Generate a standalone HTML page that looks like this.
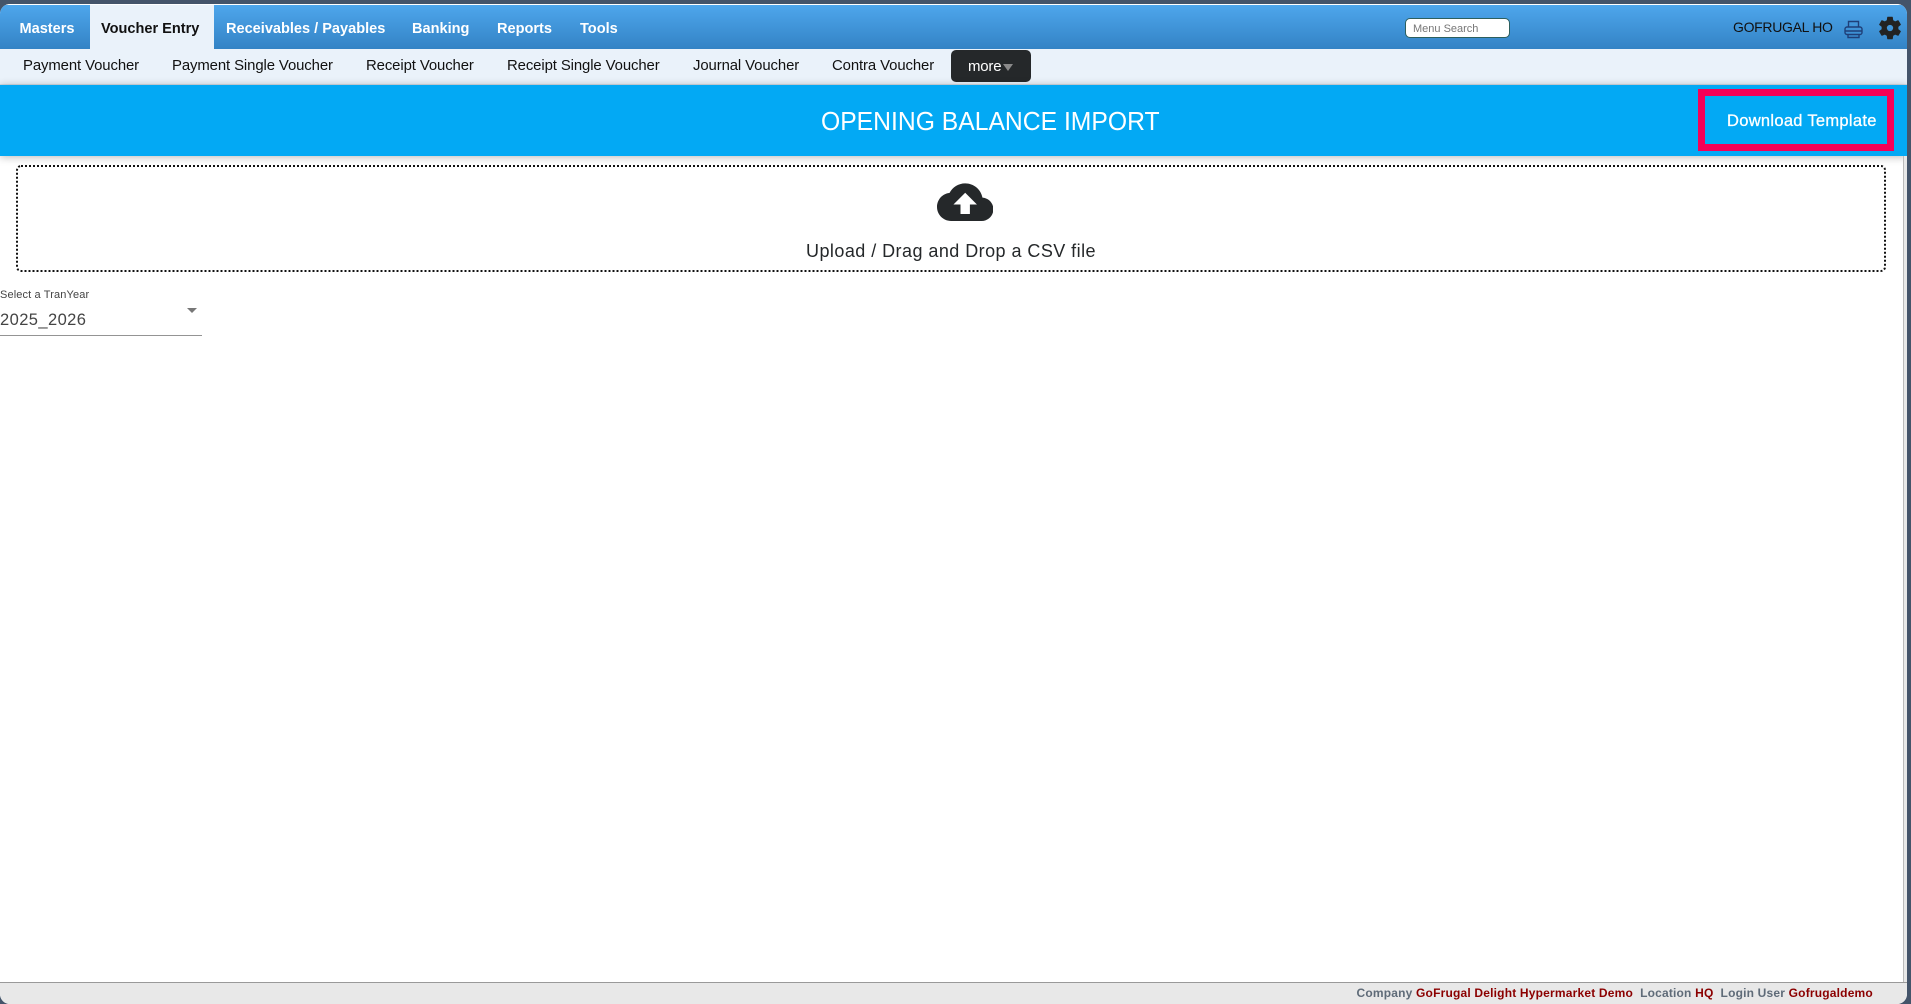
<!DOCTYPE html>
<html><head><meta charset="utf-8"><title>Opening Balance Import</title>
<style>
html,body{margin:0;padding:0;width:1911px;height:1004px;overflow:hidden;background:#44546a}
*{box-sizing:border-box}
#win{position:absolute;left:0;top:4px;width:1907px;height:1000px;background:#fff;border-radius:10px;overflow:hidden;font-family:"Liberation Sans",Arial,sans-serif}
.abs,.t{position:absolute;white-space:nowrap}
.t{line-height:20px}
.n{color:#fff;font-weight:bold;font-size:14.55px;top:15px}
.s{color:#111;font-size:14.9px;top:52px;letter-spacing:-.1px}
</style></head><body>
<div id="win">
<div class="abs" style="left:0;top:0;width:1907px;height:1px;background:#fff"></div>
<div class="abs" style="left:0;top:1px;width:1907px;height:44px;background:linear-gradient(#4ea6ec,#3383c5)"></div>
<div class="abs" style="left:90px;top:1px;width:124px;height:44px;background:#eaf2fa"></div>
<div class="abs" style="left:0;top:45px;width:1907px;height:36px;background:#eaf2fa;border-bottom:1px solid #d4dde6"></div>
<span class="t n" style="left:19.5px">Masters</span>
<span class="t n" style="left:101px;color:#111">Voucher Entry</span>
<span class="t n" style="left:226px">Receivables / Payables</span>
<span class="t n" style="left:412px">Banking</span>
<span class="t n" style="left:497px">Reports</span>
<span class="t n" style="left:580px">Tools</span>

<div class="abs" style="left:1405px;top:14px;width:105px;height:20px;background:#fff;border:1px solid #2d5f5d;border-radius:5px"></div>
<span class="t" style="left:1413px;top:15px;font-size:11px;color:#777">Menu Search</span>
<span class="t" style="left:1733px;top:13px;font-size:14px;color:#111;letter-spacing:-.3px">GOFRUGAL HO</span>
<svg class="abs" style="left:1844px;top:16px" width="19" height="19" viewBox="0 0 19 19" fill="none" stroke="#1f3f78" stroke-width="1.4"><path d="M4.5 7V1.5h10V7"/><rect x="1" y="7" width="17" height="7.5" rx="2"/><path d="M4 14.5v3h11v-3M1 11h17"/></svg>
<svg class="abs" style="left:1876px;top:9.5px" width="28" height="28" viewBox="0 0 24 24" fill="#222"><path d="M19.14 12.94c.04-.3.06-.61.06-.94 0-.32-.02-.64-.07-.94l2.03-1.58c.18-.14.23-.41.12-.61l-1.92-3.32c-.12-.22-.37-.29-.59-.22l-2.39.96c-.5-.38-1.03-.7-1.62-.94l-.36-2.54c-.04-.24-.24-.41-.48-.41h-3.84c-.24 0-.43.17-.47.41l-.36 2.54c-.59.24-1.13.57-1.62.94l-2.39-.96c-.22-.08-.47 0-.59.22L2.74 8.87c-.12.21-.08.47.12.61l2.03 1.58c-.05.3-.09.63-.09.94s.02.64.07.94l-2.03 1.58c-.18.14-.23.41-.12.61l1.92 3.32c.12.22.37.29.59.22l2.39-.96c.5.38 1.03.7 1.62.94l.36 2.54c.05.24.24.41.48.41h3.84c.24 0 .44-.17.47-.41l.36-2.54c.59-.24 1.13-.56 1.62-.94l2.39.96c.22.08.47 0 .59-.22l1.92-3.32c.12-.22.07-.47-.12-.61l-2.01-1.58zM12 15.6c-1.98 0-3.6-1.62-3.6-3.6s1.62-3.6 3.6-3.6 3.6 1.62 3.6 3.6-1.62 3.6-3.6 3.6z"/><circle cx="12" cy="12" r="3.4" fill="none" stroke="#222" stroke-width="1.4"/></svg>

<span class="t s" style="left:23px">Payment Voucher</span>
<span class="t s" style="left:172px">Payment Single Voucher</span>
<span class="t s" style="left:366px">Receipt Voucher</span>
<span class="t s" style="left:507px">Receipt Single Voucher</span>
<span class="t s" style="left:693px">Journal Voucher</span>
<span class="t s" style="left:832px">Contra Voucher</span>
<div class="abs" style="left:951px;top:46px;width:80px;height:32px;background:#25282a;border-radius:5px"></div>
<span class="t" style="left:968px;top:53px;font-size:15px;color:#fff;letter-spacing:-.2px">more</span>
<div class="abs" style="left:1003px;top:60px;width:0;height:0;border-left:5.5px solid transparent;border-right:5.5px solid transparent;border-top:7px solid #8a8a8a"></div>

<div class="abs" style="left:0;top:81px;width:1907px;height:71px;background:#03a9f4;box-shadow:0 1px 8px rgba(0,0,0,.28)"></div>
<span class="t" style="left:821px;top:107px;font-size:26px;color:#fff;font-family:'Liberation Sans',sans-serif;line-height:20px;transform:scaleX(.95);transform-origin:left center">OPENING BALANCE IMPORT</span>
<div class="abs" style="left:1698px;top:85px;width:196px;height:62px;border:7px solid #f50057"></div>
<span class="t" style="left:1727px;top:107px;font-size:16.5px;color:#fff;letter-spacing:.3px;-webkit-text-stroke:.3px #fff">Download Template</span>

<div class="abs" style="left:16px;top:161px;width:1870px;height:107px;border:2px dotted #111;border-radius:5px;background:#fff"></div>
<svg class="abs" style="left:937px;top:169.5px" width="56.4" height="56.4" viewBox="0 0 24 24" fill="#25282a"><path d="M19.35 10.04C18.67 6.59 15.64 4 12 4 9.11 4 6.6 5.64 5.35 8.04 2.34 8.36 0 10.91 0 14c0 3.31 2.69 6 6 6h13c2.76 0 5-2.24 5-5 0-2.64-2.05-4.78-4.65-4.96zM14 13v4h-4v-4H7l5-5 5 5h-3z"/></svg>
<span class="t" style="left:806px;top:237px;font-size:18px;color:#25282a;letter-spacing:.45px">Upload / Drag and Drop a CSV file</span>

<span class="t" style="left:0;top:281px;font-size:11px;color:#444;letter-spacing:.13px">Select a TranYear</span>
<span class="t" style="left:0;top:306px;font-size:16.5px;color:#444;letter-spacing:.42px">2025_2026</span>
<div class="abs" style="left:187px;top:304px;width:0;height:0;border-left:5px solid transparent;border-right:5px solid transparent;border-top:5px solid #777"></div>
<div class="abs" style="left:0;top:331px;width:202px;height:1px;background:#949494"></div>

<div class="abs" style="left:0;top:978px;width:1907px;height:22px;background:#e8e8e8;border-top:1px solid #999"></div>
<div class="abs" style="left:1903px;top:152px;width:1px;height:826px;background:#bbb"></div>
<div class="abs" style="left:1904px;top:152px;width:3px;height:826px;background:#e8e8e8"></div>
<span class="t" style="left:1356.5px;top:979px;font-size:12px;font-weight:bold;color:#5f6b78;letter-spacing:.19px">Company <span style="color:#8b0000">GoFrugal Delight Hypermarket Demo</span>&nbsp; Location <span style="color:#8b0000">HQ</span>&nbsp; Login User <span style="color:#8b0000">Gofrugaldemo</span></span>
</div>
</body></html>
